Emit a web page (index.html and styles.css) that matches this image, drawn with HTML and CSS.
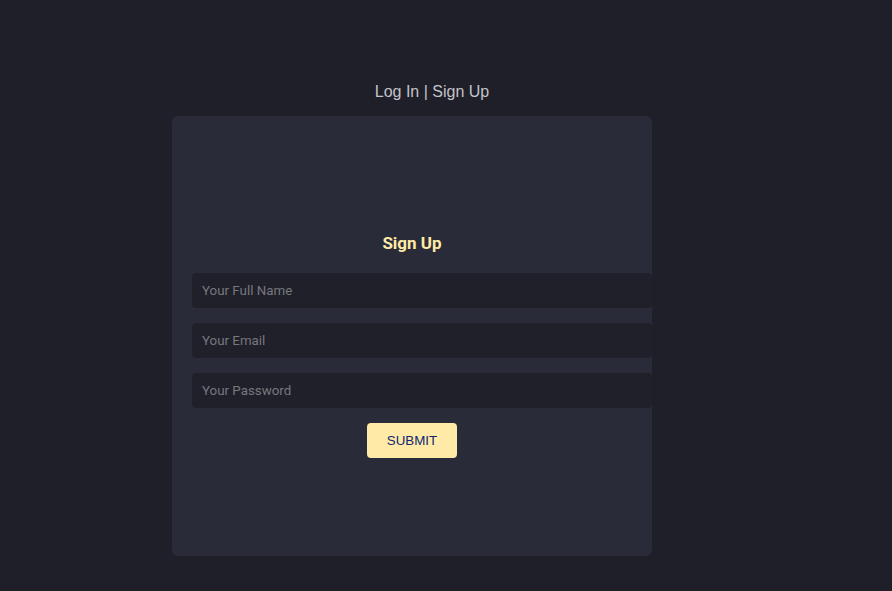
FILE: index.html
```html
<!DOCTYPE html>
<html>
<head>
<meta charset="utf-8">
<link rel="stylesheet" href="styles.css">
</head>
<body>
<div class="wrap">
  <div class="switch">Log In | Sign Up</div>
  <div class="card">
    <h4 class="title">Sign Up</h4>
    <form class="form">
      <input class="field" type="text" placeholder="Your Full Name">
      <input class="field" type="email" placeholder="Your Email">
      <input class="field" type="password" placeholder="Your Password">
      <button class="btn" type="button">SUBMIT</button>
    </form>
  </div>
</div>
</body>
</html>
```
FILE: styles.css
```css
html, body {
  margin: 0;
  padding: 0;
  background: #1f1f29;
  font-family: Roboto, "Liberation Sans", Arial, sans-serif;
  height: 100%;
}
.wrap {
  padding-top: 82px;
  padding-left: 172px;
  width: 480px;
  display: flex;
  flex-direction: column;
}
.switch {
  color: #c4c3ca;
  font-family: "Liberation Sans", Arial, sans-serif;
  font-size: 16px;
  line-height: 20px;
  text-align: center;
  padding-left: 40px;
  height: 20px;
  margin-bottom: 14px;
}
.card {
  background: #2a2b38;
  border-radius: 6px;
  height: 440px;
  box-sizing: border-box;
  padding: 115px 20px 0 20px;
}
.title {
  margin: 0 0 18px 0;
  color: #ffeba7;
  font-size: 17px;
  font-weight: 700;
  line-height: 24px;
  text-align: center;
}
.form {
  display: flex;
  flex-direction: column;
  align-items: flex-start;
  gap: 15px;
}
.field {
  width: 100%;
  box-sizing: content-box;
  height: 35px;
  padding: 0 10px;
  margin: 0;
  border: none;
  outline: none;
  border-radius: 4px;
  background: #1f2029;
  color: #c4c3ca;
  font-family: Roboto, "Liberation Sans", Arial, sans-serif;
  font-size: 13.333px;
}
.field::placeholder {
  color: #77777e;
}
.btn {
  align-self: center;
  width: 90px;
  height: 35px;
  border: none;
  border-radius: 4px;
  background: #ffeba7;
  color: #102770;
  font-family: "Liberation Sans", Arial, sans-serif;
  font-size: 13.333px;
  cursor: pointer;
}
```
